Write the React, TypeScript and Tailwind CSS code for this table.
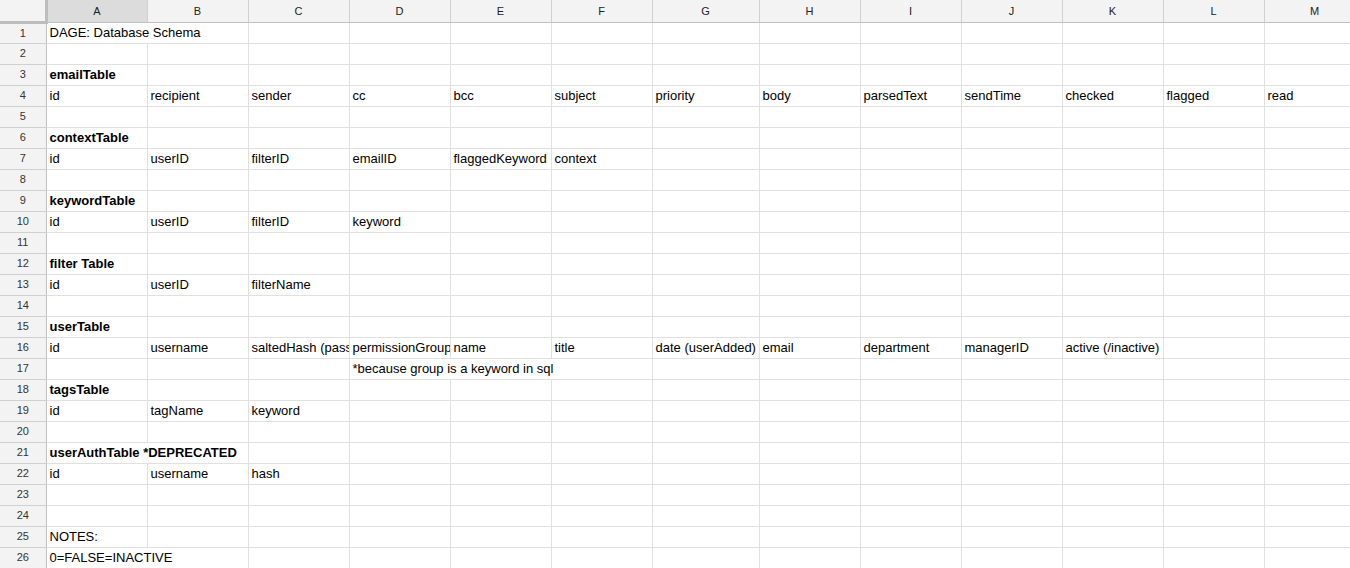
import React from 'react';

type Cell = { text?: string; span?: number };

const COLUMNS = ['A', 'B', 'C', 'D', 'E', 'F', 'G', 'H', 'I', 'J', 'K', 'L', 'M'];
const WIDTHS = [101, 101, 101, 101, 101, 101, 107, 101, 101, 101, 101, 101, 101];

const BOLD_ROWS = [3, 6, 9, 12, 15, 18, 21];

// sparse sheet data: row number -> cells from column A
const DATA: Record<number, Cell[]> = {
  1: [{ text: 'DAGE: Database Schema', span: 2 }],
  3: [{ text: 'emailTable' }],
  4: ['id', 'recipient', 'sender', 'cc', 'bcc', 'subject', 'priority', 'body', 'parsedText', 'sendTime', 'checked', 'flagged', 'read'].map((t) => ({ text: t })),
  6: [{ text: 'contextTable' }],
  7: ['id', 'userID', 'filterID', 'emailID', 'flaggedKeyword', 'context'].map((t) => ({ text: t })),
  9: [{ text: 'keywordTable' }],
  10: ['id', 'userID', 'filterID', 'keyword'].map((t) => ({ text: t })),
  12: [{ text: 'filter Table' }],
  13: ['id', 'userID', 'filterName'].map((t) => ({ text: t })),
  15: [{ text: 'userTable' }],
  16: [
    'id',
    'username',
    'saltedHash (password)',
    'permissionGroup',
    'name',
    'title',
    'date (userAdded)',
    'email',
    'department',
    'managerID',
    'active (/inactive)',
  ].map((t) => ({ text: t })),
  17: [{}, {}, {}, { text: '*because group is a keyword in sql', span: 3 }],
  18: [{ text: 'tagsTable' }],
  19: ['id', 'tagName', 'keyword'].map((t) => ({ text: t })),
  21: [{ text: 'userAuthTable *DEPRECATED', span: 2 }],
  22: ['id', 'username', 'hash'].map((t) => ({ text: t })),
  25: [{ text: 'NOTES:' }],
  26: [{ text: '0=FALSE=INACTIVE', span: 2 }],
};

const buildRow = (row: number): Cell[] => {
  const given = DATA[row] || [];
  const cells: Cell[] = [];
  let col = 0;
  given.forEach((c) => {
    cells.push(c);
    col += c.span || 1;
  });
  while (col < COLUMNS.length) {
    cells.push({});
    col++;
  }
  return cells;
};

const App: React.FC = () => {
  const rows = Array.from({ length: 26 }, (_, i) => i + 1);

  return (
    <div
      className="w-[1350px] h-[568px] overflow-hidden bg-white text-[13px] text-black"
      style={{ fontFamily: '"Liberation Sans", Arial, sans-serif' }}
    >
      <table className="table-fixed border-collapse w-[1365px]">
        <colgroup>
          <col className="w-[46px]" />
          {WIDTHS.map((w, i) => (
            <col key={i} style={{ width: w }} />
          ))}
        </colgroup>
        <thead>
          <tr className="h-[22px]">
            <th className="bg-[#f3f3f3] border-r-[3px] border-b-[3px] border-r-[#bdbdbd] border-b-[#bdbdbd] p-0" />
            {COLUMNS.map((c, i) => (
              <th
                key={c}
                className={`${i === 0 ? 'bg-[#dcdcdc]' : 'bg-[#f3f3f3]'} border border-[#d0d0d0] border-b-[#c0c0c0] border-t-0 p-0 text-[11px] font-normal text-[#222] text-center`}
              >
                {c}
              </th>
            ))}
          </tr>
        </thead>
        <tbody>
          {rows.map((r) => {
            const bold = BOLD_ROWS.includes(r);
            return (
              <tr key={r} className="h-[21px]">
                <td className="bg-[#f3f3f3] border border-[#d0d0d0] border-l-0 border-r-[#c0c0c0] p-0 text-center text-[11px] text-[#333]">
                  {r}
                </td>
                {buildRow(r).map((cell, i) => (
                  <td
                    key={i}
                    colSpan={cell.span}
                    className={`border border-[#e0e0e0] px-[3px] py-0 whitespace-nowrap overflow-hidden leading-[20px] align-bottom ${bold ? 'font-bold' : ''}`}
                  >
                    {cell.text}
                  </td>
                ))}
              </tr>
            );
          })}
        </tbody>
      </table>
    </div>
  );
};

export default App;
